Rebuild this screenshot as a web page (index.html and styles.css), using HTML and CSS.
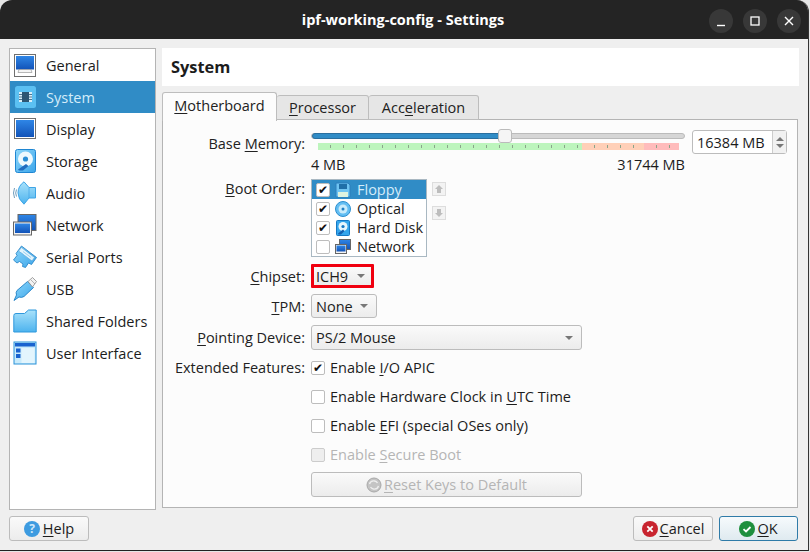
FILE: index.html
```html
<!DOCTYPE html>
<html lang="en">
<head>
<meta charset="utf-8">
<title>ipf-working-config - Settings</title>
<link rel="stylesheet" href="styles.css">
</head>
<body>
<svg class="defs" width="0" height="0" aria-hidden="true">
  <defs>
    <linearGradient id="screen" x1="0" y1="0" x2="0" y2="1"><stop offset="0" stop-color="#2f86e6"/><stop offset="1" stop-color="#1253b8"/></linearGradient>
    <linearGradient id="sky" x1="0" y1="0" x2="0" y2="1"><stop offset="0" stop-color="#a9e2fb"/><stop offset="1" stop-color="#4db3ee"/></linearGradient>
    <linearGradient id="sky2" x1="0" y1="0" x2="1" y2="1"><stop offset="0" stop-color="#8fd8fb"/><stop offset="1" stop-color="#3ba5ea"/></linearGradient>
  </defs>
</svg>
<div class="window">
  <header class="titlebar">
    <div class="title">ipf-working-config - Settings</div>
    <div class="winbtns">
      <span class="winbtn"><svg width="24" height="24" viewBox="0 0 24 24"><path d="M8 16.5h8" stroke="#fff" stroke-width="1.4"/></svg></span>
      <span class="winbtn"><svg width="24" height="24" viewBox="0 0 24 24"><rect x="8" y="8" width="8" height="8" fill="none" stroke="#fff" stroke-width="1.3"/></svg></span>
      <span class="winbtn"><svg width="24" height="24" viewBox="0 0 24 24"><path d="M8 8l8 8M16 8l-8 8" stroke="#fff" stroke-width="1.4"/></svg></span>
    </div>
  </header>
  <div class="body">
    <div class="main">
      <nav class="sidebar">
        <div class="navitem">
          <svg class="navicon" viewBox="0 0 24 24"><rect x="1.500" y="1.500" width="21" height="22" fill="#fff" stroke="#6f6f6f"/><rect x="3" y="3" width="18" height="13.500" fill="url(#screen)"/><path d="M6 16.500h12l1 3H5z" fill="#f4f4f4" stroke="#8a8a8a" stroke-width=".6"/></svg>
          <span>General</span>
        </div>
        <div class="navitem selected">
          <svg class="navicon" viewBox="0 0 24 24"><rect x="2" y="1" width="21" height="22" rx="2.500" fill="#5bc0f2"/><rect x="6" y="7" width="13" height="10" fill="#d9eef9"/><rect x="9" y="7" width="7" height="10" fill="#2d5573"/><path d="M6 9.500h3M6 12h3M6 14.500h3M16 9.500h3M16 12h3M16 14.500h3" stroke="#2d5573" stroke-width=".8"/></svg>
          <span>System</span>
        </div>
        <div class="navitem">
          <svg class="navicon" viewBox="0 0 24 24"><rect x="1.500" y="1.500" width="21" height="20" fill="#fff" stroke="#6f6f6f"/><rect x="3" y="3" width="18" height="17" fill="url(#screen)"/></svg>
          <span>Display</span>
        </div>
        <div class="navitem">
          <svg class="navicon" viewBox="0 0 24 24"><rect x="2.500" y=".5" width="20" height="23" rx="2" fill="url(#sky2)" stroke="#1f86d2"/><circle cx="12.500" cy="10" r="7.500" fill="#eef9fe"/><circle cx="12.500" cy="10" r="2.600" fill="#2a8ed6"/><path d="M5 20.500l8-5.500 2.500 2L10 21.500H6z" fill="#1f6cc0"/></svg>
          <span>Storage</span>
        </div>
        <div class="navitem">
          <svg class="navicon" viewBox="0 0 24 24"><path d="M5 12Q5 5 11 .8L16 6.500h6.500v10.500H16l-5 6.200Q5 18 5 12z" fill="url(#sky)" stroke="#3fa5e6"/><path d="M16 6.500v10.500" stroke="#3fa5e6" stroke-width=".7"/><path d="M3.500 8.500q-1.600 3.500 0 7M1.500 7q-2 5 0 10" fill="none" stroke="#6f9dbd"/></svg>
          <span>Audio</span>
        </div>
        <div class="navitem">
          <svg class="navicon" viewBox="0 0 24 24"><rect x="5" y="1.500" width="18" height="16" fill="url(#screen)" stroke="#666"/><rect x=".5" y="9" width="18" height="13" fill="#f4f4f4" stroke="#666"/><rect x="2" y="10.500" width="15" height="9.500" fill="url(#screen)"/></svg>
          <span>Network</span>
        </div>
        <div class="navitem">
          <svg class="navicon" viewBox="0 0 24 24"><path d="M8.500 1l15 11.500-5 7-3-1.500-3 4.500-3-1 .5-2.500-3.500-2.500-2.500 1.500-3.500-3 3.500-4.500-1-2z" fill="url(#sky2)" stroke="#1f7fc4" stroke-width=".8"/><path d="M8.500 2.500l13 10-2.500 3.500L5.500 6z" fill="#e3f4fd" stroke="#4a9ed6" stroke-width=".6"/><path d="M10 6.500l8 6M8.500 8l6 5" stroke="#7dbfe8" stroke-width=".7"/></svg>
          <span>Serial Ports</span>
        </div>
        <div class="navitem">
          <svg class="navicon" viewBox="0 0 24 24"><path d="M14.500 4.500l6 6-9.500 9q-2.500 1.500-5 .5L1 23.500l2.500-5.500q-1-2.500.5-4.500z" fill="url(#sky2)" stroke="#1f7fc4" stroke-width=".9"/><path d="M15 4.500l4.500-4 4 4-4 5.500z" fill="#f2f2f2" stroke="#8a8a8a" stroke-width=".8"/><path d="M18.500 3.500l1 1M20.500 5.500l1 1" stroke="#777"/></svg>
          <span>USB</span>
        </div>
        <div class="navitem">
          <svg class="navicon" viewBox="0 0 24 24"><path d="M.8 23V6.500Q.8 4.500 3 4.500h8.500l4-3.500h7.700v22z" fill="url(#sky)" stroke="#2f98dc"/></svg>
          <span>Shared Folders</span>
        </div>
        <div class="navitem">
          <svg class="navicon" viewBox="0 0 24 24"><rect x="1" y="1" width="22" height="22" fill="#c9ebfb" stroke="#2b92d8"/><rect x="2" y="2" width="20" height="3.500" fill="#1a63cf"/><rect x="8.500" y="7" width="13" height="15" fill="#e3f5fd"/><rect x="3" y="7.500" width="4.500" height="4" fill="#1a63cf"/><rect x="3" y="13" width="4.500" height="4" fill="#1a63cf"/></svg>
          <span>User Interface</span>
        </div>
      </nav>
      <section class="content">
        <h1 class="pagehead">System</h1>
        <div class="tabs">
          <div class="tab active"><u>M</u>otherboard</div>
          <div class="tab tab-proc"><u>P</u>rocessor</div>
          <div class="tab tab-accel">Acc<u>e</u>leration</div>
        </div>
        <div class="pane">
          <div class="row row-mem">
            <label class="lbl">Base <u>M</u>emory:</label>
            <div class="mem">
              <div class="slider-wrap">
                <div class="slider"><div class="slider-fill"></div><div class="thumb"></div></div>
                <div class="ticks"><i class="g"></i><i class="o"></i><i class="r"></i></div>
                <div class="range"><span>4 MB</span><span>31744 MB</span></div>
              </div>
              <div class="spin"><span class="spin-val">16384 MB</span><span class="spin-btns"><b class="up"></b><b class="down"></b></span></div>
            </div>
          </div>
          <div class="row row-boot">
            <label class="lbl"><u>B</u>oot Order:</label>
            <div class="boot">
              <div class="bootlist">
                <div class="bootitem sel"><span class="cb on">✔</span>
                  <svg class="booticon" viewBox="0 0 16 16"><path d="M1 1h12l2 2v12H1z" fill="#6fc4f2" stroke="#2c7fbc"/><rect x="4" y="2" width="8" height="5" fill="#1f6fa8"/><rect x="3" y="10" width="10" height="5" fill="#dff3df"/></svg>
                  <span>Floppy</span></div>
                <div class="bootitem"><span class="cb on">✔</span>
                  <svg class="booticon" viewBox="0 0 16 16"><circle cx="8" cy="8" r="7.500" fill="#63bef2" stroke="#2c8fd0"/><circle cx="8" cy="8" r="4.500" fill="#c8ebfb"/><circle cx="8" cy="8" r="1.500" fill="#1f7fc4"/></svg>
                  <span>Optical</span></div>
                <div class="bootitem"><span class="cb on">✔</span>
                  <svg class="booticon" viewBox="0 0 16 16"><rect x="1.500" y=".5" width="13" height="15" rx="1" fill="#35a6ec" stroke="#1578c4"/><circle cx="8" cy="6.500" r="4.500" fill="#e8f6fd"/><circle cx="8" cy="6.500" r="1.600" fill="#1578c4"/><path d="M3 13.500l5-4 1.500 1.500L6 14.500H3.500z" fill="#1560b0"/></svg>
                  <span>Hard Disk</span></div>
                <div class="bootitem"><span class="cb"></span>
                  <svg class="booticon" viewBox="0 0 16 16"><rect x="4.500" y=".5" width="11" height="10" fill="url(#screen)" stroke="#666"/><rect x=".5" y="5.500" width="11" height="9" fill="#f4f4f4" stroke="#666"/><rect x="1.500" y="6.500" width="9" height="6" fill="url(#screen)"/></svg>
                  <span>Network</span></div>
              </div>
              <div class="bootbtns">
                <span class="arrowbtn"><svg width="10" height="10" viewBox="0 0 10 10"><path d="M5 1l4 4H7v4H3V5H1z" fill="#bdbdbd"/></svg></span>
                <span class="arrowbtn"><svg width="10" height="10" viewBox="0 0 10 10"><path d="M5 9L1 5h2V1h4v4h2z" fill="#bdbdbd"/></svg></span>
              </div>
            </div>
          </div>
          <div class="row row-combo">
            <label class="lbl"><u>C</u>hipset:</label>
            <div class="combo chipset">ICH9<i class="caret"></i></div>
          </div>
          <div class="row row-combo row-tpm">
            <label class="lbl"><u>T</u>PM:</label>
            <div class="combo tpm">None<i class="caret"></i></div>
          </div>
          <div class="row row-combo row-point">
            <label class="lbl"><u>P</u>ointing Device:</label>
            <div class="combo pointing">PS/2 Mouse<i class="caret"></i></div>
          </div>
          <div class="row row-check row-first">
            <label class="lbl">Extended Features:</label>
            <div class="check"><span class="cb on">✔</span><span>Enable <u>I</u>/O APIC</span></div>
          </div>
          <div class="row row-check">
            <span class="lbl"></span>
            <div class="check"><span class="cb"></span><span>Enable Hardware Clock in <u>U</u>TC Time</span></div>
          </div>
          <div class="row row-check">
            <span class="lbl"></span>
            <div class="check"><span class="cb"></span><span>Enable <u>E</u>FI (special OSes only)</span></div>
          </div>
          <div class="row row-check">
            <span class="lbl"></span>
            <div class="check disabled"><span class="cb dis"></span><span>Enable <u>S</u>ecure Boot</span></div>
          </div>
          <div class="row row-reset">
            <span class="lbl"></span>
            <div class="btn reset">
              <svg width="16" height="16" viewBox="0 0 16 16"><circle cx="8" cy="8" r="7" fill="#c4c4c4" stroke="#a8a8a8"/><path d="M3.500 7q1-3.500 5-3 2 .4 3 2M12.500 9q-1 3.500-5 3-2-.4-3-2" fill="none" stroke="#eee" stroke-width="1.300"/></svg>
              <span><u>R</u>eset Keys to Default</span>
            </div>
          </div>
        </div>
      </section>
    </div>
    <footer class="footer">
      <div class="btn help">
        <svg width="16" height="16" viewBox="0 0 16 16"><circle cx="8" cy="8" r="8" fill="#3d9be0"/><text x="8" y="12" text-anchor="middle" class="qmark">?</text></svg>
        <span><u>H</u>elp</span>
      </div>
      <div class="footer-right">
        <div class="btn cancel">
          <svg width="16" height="16" viewBox="0 0 16 16"><circle cx="8" cy="8" r="8" fill="#c8242f"/><path d="M5.300 5.300l5.400 5.400M10.700 5.300l-5.400 5.400" stroke="#fff" stroke-width="1.800"/></svg>
          <span><u>C</u>ancel</span>
        </div>
        <div class="btn ok">
          <svg width="16" height="16" viewBox="0 0 16 16"><circle cx="8" cy="8" r="8" fill="#1e8f3e"/><path d="M4.500 8.200l2.500 2.300 4.500-4.500" fill="none" stroke="#fff" stroke-width="1.800"/></svg>
          <span><u>O</u>K</span>
        </div>
      </div>
    </footer>
  </div>
</div>
</body>
</html>
```
FILE: styles.css
```css
* { box-sizing: border-box; }
html, body { margin: 0; padding: 0; }
body {
  width: 810px; height: 552px; overflow: hidden;
  background: #e6e6e6;
  font-family: "Open Sans", "Noto Sans", sans-serif;
  font-size: 14.5px; color: #1c1c1c;
}
.defs { position: absolute; }
u { text-underline-offset: 2px; }
.window {
  width: 809px; height: 551px;
  border-radius: 12px 12px 0 0;
  overflow: hidden;
  display: flex; flex-direction: column;
  background: #efefef;
  border-bottom: 1px solid #222;
  border-right: 1px solid #333;
}
.titlebar {
  height: 39px; flex: none;
  background: #242424; color: #fff;
  display: flex; align-items: center; justify-content: center;
  position: relative;
}
.title { font-weight: 700; font-size: 14.5px; padding-right: 2px; }
.winbtns { position: absolute; right: 7px; top: 9px; display: flex; gap: 10px; }
.winbtn { width: 24px; height: 24px; border-radius: 50%; background: #383838; display: block; }
.winbtn svg { display: block; }
.body { flex: 1; display: flex; flex-direction: column; padding: 9px 10px 0 9px; }
.main { display: flex; gap: 6px; height: 462px; }
.sidebar {
  width: 147px; flex: none; background: #fff;
  border: 1px solid #b4b4b4;
}
.navitem { height: 32px; display: flex; align-items: center; padding-left: 3px; gap: 9px; color: #1c1c1c; }
.navitem.selected { background: #308cc6; color: #d4ecfa; }
.navicon { width: 24px; height: 24px; flex: none; }
.content { flex: 1; display: flex; flex-direction: column; min-width: 0; }
.pagehead {
  margin: 0 -1px 0 0; height: 38px; background: #fff;
  font-size: 16.4px; font-weight: 700; line-height: 38px;
  padding-left: 9px; color: #1c1c1c;
}
.tabs { display: flex; margin-top: 8px; height: 25px; position: relative; z-index: 1; }
.tab {
  height: 25px; margin-top: 1px;
  background: #e6e6e6; border: 1px solid #bdbdbd; border-left: 0;
  border-radius: 3px 3px 0 0;
  line-height: 23px; color: #222; text-align: center;
}
.tab-proc { width: 92px; }
.tab-accel { width: 110px; }
.tab.active {
  width: 115px;
  background: #fcfcfc; border-left: 1px solid #bdbdbd; border-bottom: 0;
  margin-top: -2px; height: 29px; line-height: 26px;
}
.pane {
  height: 389px; background: #fcfcfc;
  border: 1px solid #b4b4b4;
  padding-top: 12px;
}
.row { display: grid; grid-template-columns: 142px 1fr; column-gap: 6px; align-items: center; }
.lbl { text-align: right; color: #222; white-space: nowrap; }
.row-mem { align-items: start; height: 48px; }
.row-mem .lbl { padding-top: 2px; }
.mem { display: flex; gap: 7px; width: 476px; }
.slider-wrap { width: 374px; flex: none; }
.slider { height: 6px; margin-top: 1px; background: #d6d6d6; border: 1px solid #bbb; border-radius: 3px; position: relative; }
.slider-fill { position: absolute; left: 0; top: -1px; height: 6px; width: 191px; background: #308cc6; border-radius: 3px 0 0 3px; border: 1px solid #2a6f9f; }
.thumb { position: absolute; left: 186px; top: -5px; width: 14px; height: 14px; background: #f5f5f5; border: 1px solid #bbb; border-radius: 3px; }
.ticks { display: flex; margin: 4px 6px 0 7px; height: 7px; }
.ticks i { display: block; height: 7px; background-image: repeating-linear-gradient(90deg, transparent 0 12px, #8aa58a 12px 13px); background-size: 100% 3px; background-position: center; background-repeat: no-repeat; }
.ticks .g { width: 264px; background-color: #bdf5bd; }
.ticks .o { width: 62px; background-color: #ffd0b8; }
.ticks .r { width: 35px; background-color: #ffbcbc; }
.range { display: flex; justify-content: space-between; margin-top: 6px; line-height: 18px; }
.spin { width: 96px; height: 24px; margin-top: -2px; background: #fff; border: 1px solid #bcbcbc; border-radius: 3px; display: flex; align-items: center; padding-left: 4px; }
.spin-val { flex: 1; white-space: nowrap; }
.spin-btns { width: 14px; height: 22px; border-left: 1px solid #ccc; display: flex; flex-direction: column; align-items: center; justify-content: center; gap: 3px; background: #f1f1f1; }
.spin-btns b { width: 0; height: 0; border-left: 4px solid transparent; border-right: 4px solid transparent; }
.spin-btns .up { border-bottom: 4px solid #777; }
.spin-btns .down { border-top: 4px solid #777; }
.row-boot { align-items: start; height: 84px; }
.row-boot .lbl { margin-top: -1px; }
.boot { display: flex; gap: 5px; margin-top: -1px; }
.bootlist { width: 116px; height: 78px; background: #fff; border: 1px solid #a9b8c2; }
.bootitem { height: 19px; display: flex; align-items: center; padding-left: 4px; gap: 6px; line-height: 19px; }
.bootitem .cb { margin-right: -1px; }
.bootitem.sel { background: #308cc6; color: #d4ecfa; }
.booticon { width: 16px; height: 16px; flex: none; }
.cb { width: 14px; height: 14px; flex: none; background: #fff; border: 1px solid #bdbdbd; border-radius: 2px; display: inline-flex; align-items: center; justify-content: center; font-family: "DejaVu Sans", sans-serif; font-size: 12px; color: #111; line-height: 1; }
.cb.dis { background: #eee; border-color: #ccc; }
.bootbtns { display: flex; flex-direction: column; gap: 10px; padding-top: 3px; }
.arrowbtn { width: 14px; height: 14px; background: #f3f3f3; border: 1px solid #ddd; display: flex; align-items: center; justify-content: center; }
.row-combo { height: 24px; }
.row-tpm { margin-top: 6px; }
.row-point { margin-top: 7px; height: 25px; }
.combo { height: 24px; background: linear-gradient(#fafafa, #ececec); border: 1px solid #bcbcbc; border-radius: 3px; display: flex; align-items: center; justify-content: space-between; padding: 0 8px 0 4px; }
.row-point .combo { height: 25px; }
.caret { width: 0; height: 0; border-left: 4px solid transparent; border-right: 4px solid transparent; border-top: 4px solid #777; }
.chipset { width: 63px; border: 3px solid #f0000f; border-radius: 1px; padding: 0 6px 0 2px; }
.tpm { width: 66px; }
.pointing { width: 271px; }
.row-check { height: 29px; }
.row-first { margin-top: 3px; }
.check { display: flex; align-items: center; gap: 5px; }
.disabled { color: #b5b5b5; }
.row-reset { height: 25px; margin-top: 3px; }
.btn { height: 25px; background: linear-gradient(#fafafa, #ececec); border: 1px solid #bcbcbc; border-radius: 3px; display: flex; align-items: center; justify-content: center; gap: 2px; }
.reset { width: 271px; color: #b5b5b5; }
.footer { display: flex; justify-content: space-between; margin-top: 6px; }
.footer-right { display: flex; gap: 6px; }
.help { width: 80px; gap: 3px; }
.cancel { width: 80px; }
.ok { width: 79px; border-color: #2f7ba8; background: linear-gradient(#f6fafc, #dfeaf0); }
.qmark { font-size: 12px; fill: #cfe8fa; font-weight: 700; }
```
